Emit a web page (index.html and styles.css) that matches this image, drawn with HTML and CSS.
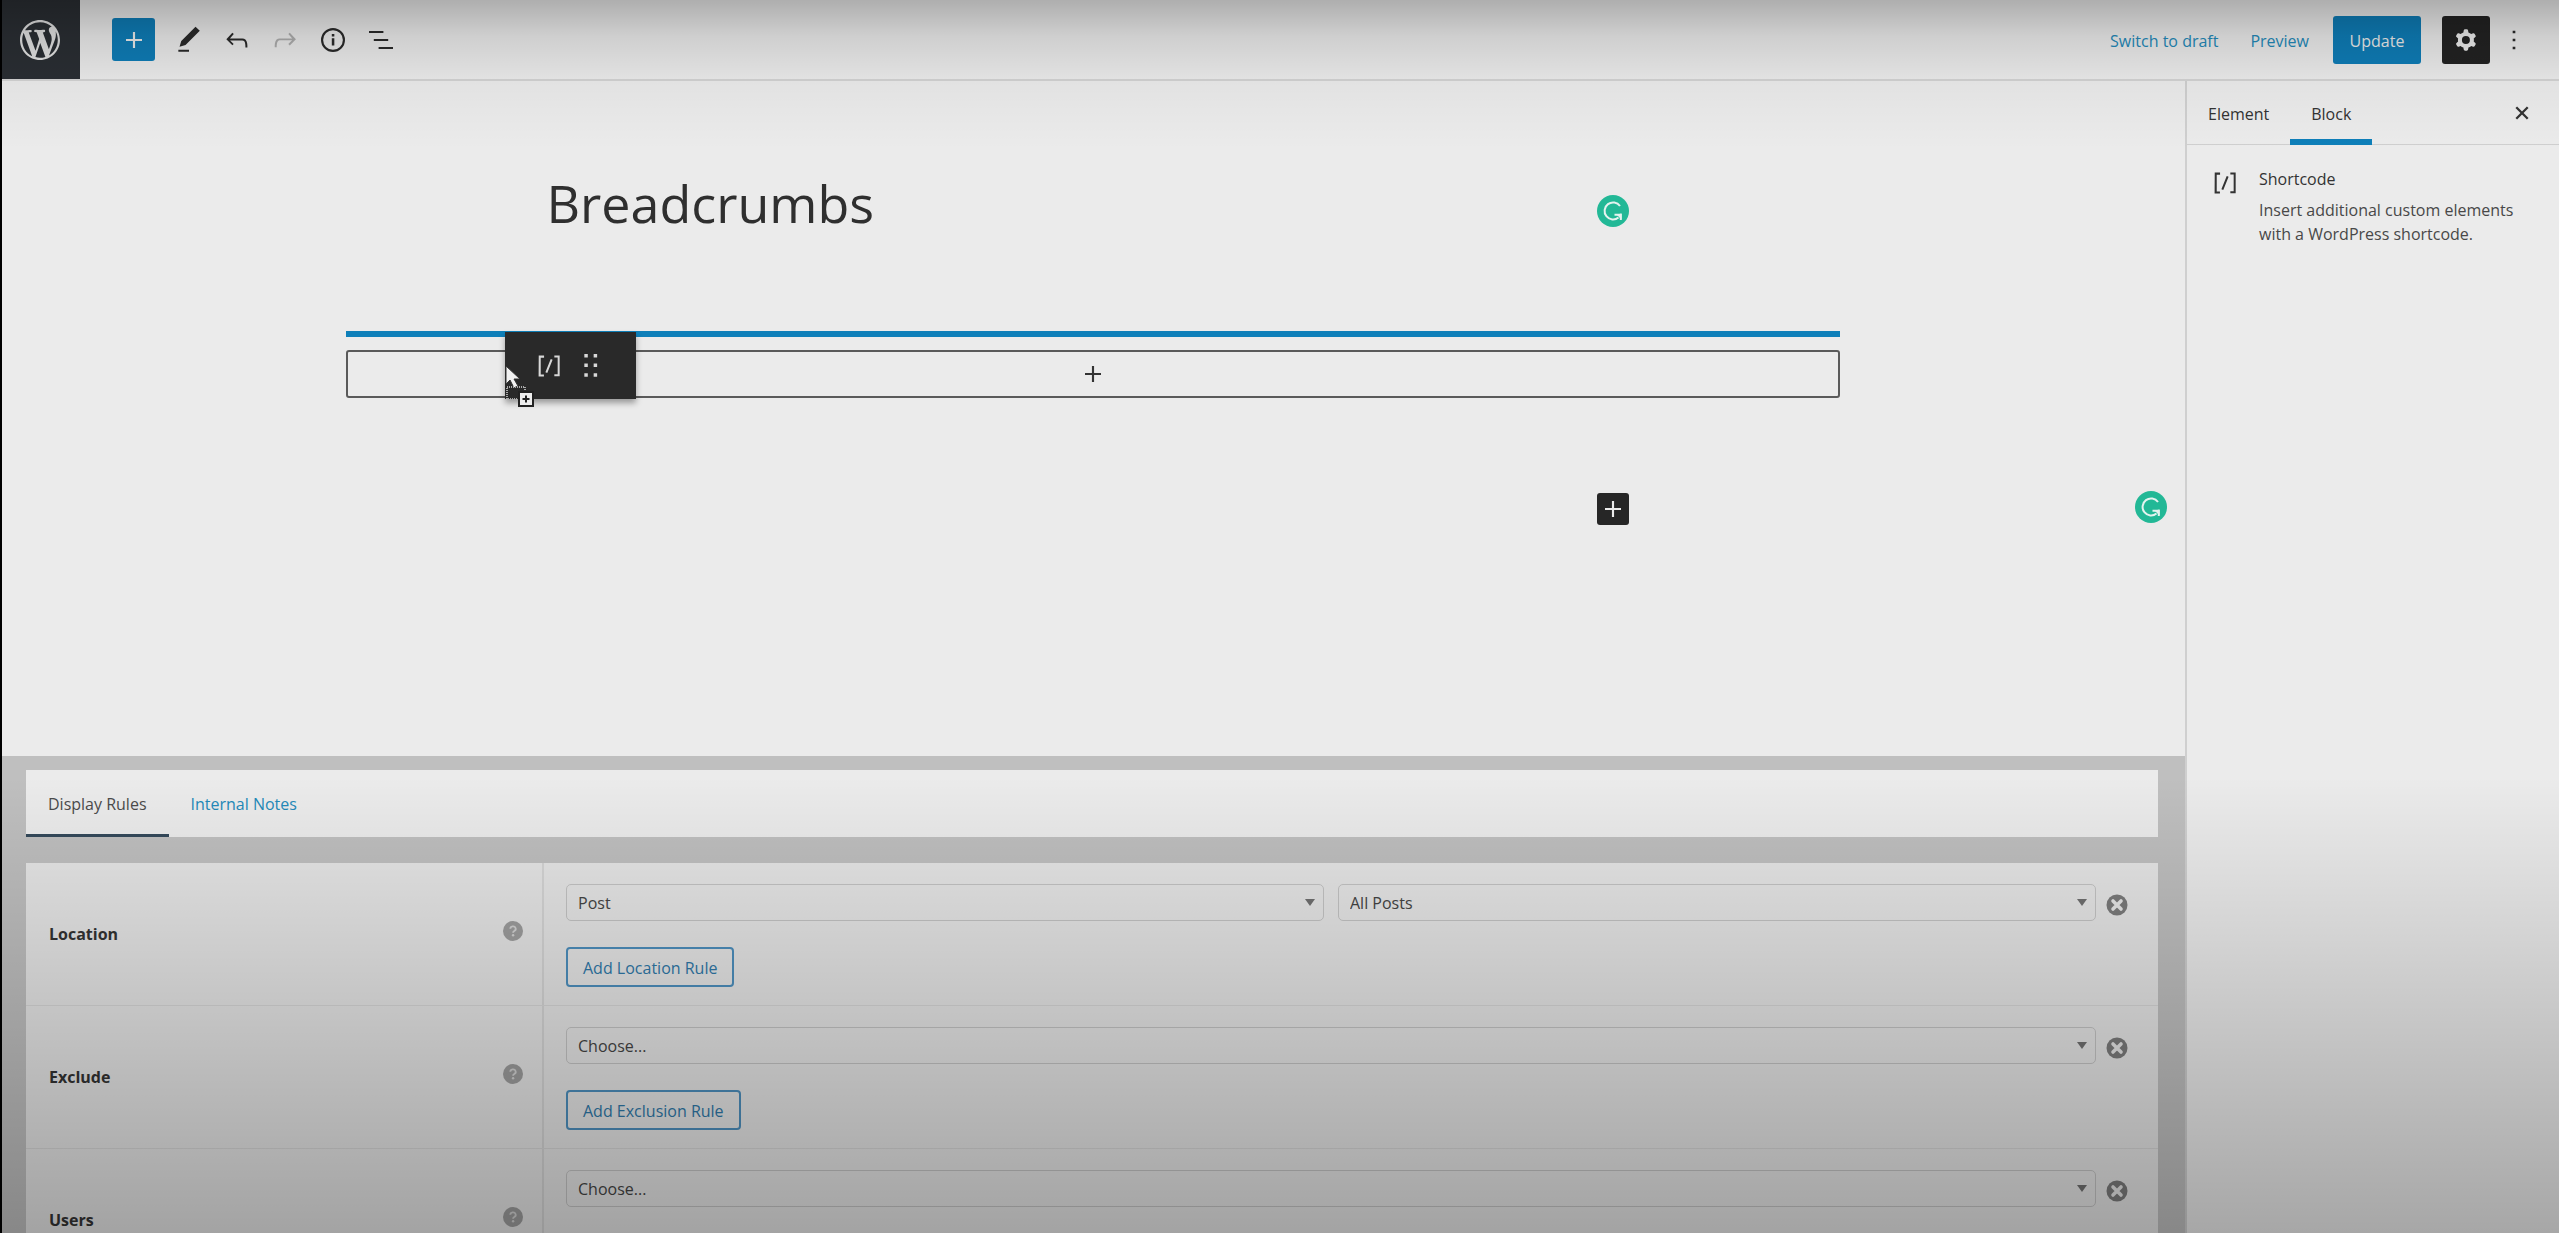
FILE: index.html
```html
<!DOCTYPE html>
<html lang="en">
<head>
<meta charset="utf-8">
<meta name="viewport" content="width=device-width, initial-scale=1">
<title>Edit Element: Breadcrumbs</title>
<link rel="stylesheet" href="styles.css">
</head>
<body>
<svg class="sprite" aria-hidden="true">
  <symbol id="plus" viewBox="0 0 24 24"><path d="M18 11.2h-5.2V6h-1.6v5.2H6v1.6h5.2V18h1.6v-5.2H18z"/></symbol>
  <symbol id="shortcode" viewBox="0 0 24 24"><path d="M16 4.2v1.5h2.5v12.5H16v1.5h4V4.2h-4zM4.2 19.8h4v-1.5H5.8V5.8h2.5V4.2h-4l-.1 15.6zm5.1-3.1l1.4.6 4-10-1.4-.6-4 10z"/></symbol>
  <symbol id="grammarly" viewBox="0 0 32 32"><circle cx="16" cy="16" r="16" fill="#22b896"/><path d="M23 11A8.500 8.500 0 1 0 21.500 22.500M17.500 19.800H23.500M23.800 18.500V25" fill="none" stroke="#e4f3ef" stroke-width="2"/><path d="M19 19h5.500v5.500z" fill="#e4f3ef"/></symbol>
  <symbol id="help" viewBox="0 0 20 20"><circle cx="10" cy="10" r="10" fill="#9d9d9d"/><path d="M7.300 7.800a2.700 2.500 0 1 1 4 2.200c-.9.500-1.200.8-1.200 1.800" fill="none" stroke="#d2d2d2" stroke-width="1.800"/><circle cx="10.100" cy="14.300" r="1.200" fill="#d2d2d2"/></symbol>
  <symbol id="remove" viewBox="0 0 22 22"><circle cx="11" cy="11" r="10.500" fill="#7b7b7b"/><path d="M7 7l8 8M15 7l-8 8" stroke="#e6e6e6" stroke-width="3.600" stroke-linecap="round"/></symbol>
</svg>

<div class="editor">
  <header class="topbar">
    <a class="logo" href="#" aria-label="View elements"><svg viewBox="0 0 20 20"><path d="M20 10c0-5.510-4.490-10-10-10C4.480 0 0 4.490 0 10c0 5.520 4.480 10 10 10 5.510 0 10-4.480 10-10zM7.780 15.370L4.370 6.220c.55-.02 1.170-.08 1.170-.08.5-.06.44-1.130-.06-1.110 0 0-1.450.11-2.370.11-.18 0-.37 0-.58-.01C4.120 2.690 6.870 1.110 10 1.110c2.330 0 4.450.87 6.050 2.340-.68-.11-1.650.39-1.650 1.580 0 .74.45 1.360.9 2.100.35.61.55 1.360.55 2.460 0 1.490-1.400 5-1.400 5l-3.030-8.370c.54-.02.82-.17.82-.17.5-.05.44-1.250-.06-1.220 0 0-1.440.12-2.380.12-.87 0-2.330-.12-2.330-.12-.5-.03-.56 1.200-.06 1.220l.92.08 1.260 3.410zM17.410 10c.24-.64.74-1.870.43-4.250.7 1.290 1.050 2.710 1.050 4.250 0 3.290-1.730 6.240-4.400 7.780.97-2.590 1.940-5.200 2.920-7.780zM6.100 18.090C3.120 16.650 1.110 13.530 1.110 10c0-1.300.23-2.480.72-3.590C3.250 10.300 4.670 14.200 6.100 18.090zm4.030-6.630l2.580 6.980c-.86.29-1.760.45-2.710.45-.79 0-1.570-.11-2.290-.33.81-2.380 1.620-4.740 2.420-7.100z"/></svg></a>
    <div class="tools">
      <button class="inserter" aria-label="Add block"><svg class="icon"><use href="#plus"/></svg></button>
      <button class="tool" aria-label="Tools"><svg class="icon" viewBox="0 0 24 24"><path d="M20.100 5.100L16.900 2 6.200 12.700l-1.300 4.400 4.500-1.300L20.100 5.100zM4 20.800h8v-1.500H4v1.500z"/></svg></button>
      <button class="tool" aria-label="Undo"><svg class="icon" viewBox="0 0 24 24"><path d="M18.300 11.700c-.6-.6-1.400-.9-2.300-.9H6.700l2.900-3.300-1.100-1-4.500 5L8.500 16l1-1-2.700-2.700H16c.5 0 .9.200 1.300.5 1 1 1 3.400 1 4.500v.3h1.500v-.2c0-1.500 0-4.300-1.500-5.700z"/></svg></button>
      <button class="tool" aria-label="Redo" disabled><svg class="icon" viewBox="0 0 24 24"><path d="M15.600 6.500l-1.100 1 2.900 3.300H8c-.9 0-1.700.3-2.300.9-1.400 1.500-1.400 4.200-1.400 5.600v.2h1.500v-.3c0-1.100 0-3.500 1-4.500.3-.3.7-.5 1.300-.5h9.200L14.500 15l1.100 1.100 4.600-4.600-4.600-5z"/></svg></button>
      <button class="tool" aria-label="Details"><svg class="icon" viewBox="0 0 24 24"><circle cx="12" cy="12" r="8.200" fill="none" stroke="currentColor" stroke-width="1.600"/><path d="M11.100 10.700h1.900v5.500h-1.900zM11.100 7.500h1.900v1.900h-1.900z"/></svg></button>
      <button class="tool" aria-label="List view"><svg class="icon" viewBox="0 0 24 24"><path d="M13.800 5.200H3v1.500h10.800V5.200zm-3.600 12v1.500H21v-1.500H10.200zm7.200-6H6.600v1.500h10.800v-1.500z"/></svg></button>
    </div>
    <div class="actions">
      <a class="action-link" href="#">Switch to draft</a>
      <a class="action-link" href="#">Preview</a>
      <button class="update">Update</button>
      <button class="settings" aria-label="Settings" aria-pressed="true"><svg class="icon" viewBox="0 0 24 24"><path fill-rule="evenodd" d="M10.289 4.836A1 1 0 0111.275 4h1.306a1 1 0 01.987.836l.244 1.466c.787.26 1.503.679 2.108 1.218l1.393-.522a1 1 0 011.216.437l.653 1.130a1 1 0 01-.23 1.273l-1.148.944a6.025 6.025 0 010 2.435l1.149.946a1 1 0 01.23 1.272l-.653 1.130a1 1 0 01-1.216.437l-1.394-.522c-.605.54-1.320.958-2.108 1.218l-.244 1.466a1 1 0 01-.987.836h-1.306a1 1 0 01-.986-.836l-.244-1.466a5.995 5.995 0 01-2.108-1.218l-1.394.522a1 1 0 01-1.217-.436l-.653-1.131a1 1 0 01.23-1.272l1.149-.946a6.026 6.026 0 010-2.435l-1.148-.944a1 1 0 01-.23-1.272l.653-1.131a1 1 0 011.217-.437l1.393.522a5.994 5.994 0 012.108-1.218l.244-1.466zM14.929 12a3 3 0 11-6 0 3 3 0 016 0z"/></svg></button>
      <button class="tool" aria-label="Options"><svg class="icon" viewBox="0 0 24 24"><path d="M11 5h2v2h-2zM11 11h2v2h-2zM11 17h2v2h-2z"/></svg></button>
    </div>
  </header>

  <main class="content">
    <section class="canvas" aria-label="Editor content">
      <div class="column title-row">
        <h1 class="title">Breadcrumbs</h1>
        <svg class="grammarly"><use href="#grammarly"/></svg>
      </div>
      <div class="block-area">
        <div class="drop-line"></div>
        <button class="appender" aria-label="Add block"><svg class="appender-icon"><use href="#plus"/></svg></button>
        <div class="drag-chip">
          <svg class="icon"><use href="#shortcode"/></svg>
          <svg class="icon" viewBox="0 0 24 24"><path d="M7 3h2.600v2.600H7zM14 3h2.600v2.600H14zM7 10.200h2.600v2.600H7zM14 10.200h2.600v2.600H14zM7 17.400h2.600V20H7zM14 17.400h2.600V20H14z"/></svg>
          <svg class="cursor" viewBox="0 0 30 44"><path d="M1 2v18l4-4 4 8 4-2-4-7h6z" fill="#f2f2f2" stroke="#333"/><path d="M2 23h18v12H2z" fill="none" stroke="#aaa" stroke-width="2" stroke-dasharray="1 1"/><path d="M14 28h14v14H14z" fill="#eee" stroke="#222" stroke-width="2"/><path d="M21 31.500v7M17.500 35h7" stroke="#222" stroke-width="2"/></svg>
        </div>
      </div>
      <div class="column inline-row">
        <button class="inline-inserter" aria-label="Add block"><svg class="appender-icon"><use href="#plus"/></svg></button>
      </div>
      <svg class="grammarly grammarly-float"><use href="#grammarly"/></svg>
    </section>

    <section class="meta" aria-label="Element settings">
      <nav class="meta-tabs">
        <a class="meta-tab meta-tab-active" href="#">Display Rules</a>
        <a class="meta-tab" href="#">Internal Notes</a>
      </nav>
      <div class="rules">
        <div class="rule">
          <div class="rule-label"><label for="location">Location</label><svg class="help"><use href="#help"/></svg></div>
          <div class="rule-body">
            <div class="fields">
              <div class="select"><select id="location"><option>Post</option></select></div>
              <div class="select"><select aria-label="Location object"><option>All Posts</option></select></div>
              <button class="remove" aria-label="Remove rule"><svg><use href="#remove"/></svg></button>
            </div>
            <button class="add">Add Location Rule</button>
          </div>
        </div>
        <div class="rule">
          <div class="rule-label"><label for="exclude">Exclude</label><svg class="help"><use href="#help"/></svg></div>
          <div class="rule-body">
            <div class="fields">
              <div class="select"><select id="exclude"><option>Choose...</option></select></div>
              <button class="remove" aria-label="Remove rule"><svg><use href="#remove"/></svg></button>
            </div>
            <button class="add">Add Exclusion Rule</button>
          </div>
        </div>
        <div class="rule">
          <div class="rule-label"><label for="users">Users</label><svg class="help"><use href="#help"/></svg></div>
          <div class="rule-body">
            <div class="fields">
              <div class="select"><select id="users"><option>Choose...</option></select></div>
              <button class="remove" aria-label="Remove rule"><svg><use href="#remove"/></svg></button>
            </div>
            <button class="add">Add User Rule</button>
          </div>
        </div>
      </div>
    </section>
  </main>

  <aside class="sidebar">
    <div class="sidebar-tabs">
      <button class="sidebar-tab">Element</button>
      <button class="sidebar-tab sidebar-tab-active">Block</button>
      <button class="close" aria-label="Close settings"><svg viewBox="0 0 14 14"><path d="M2 2l10 10M12 2L2 12" stroke="currentColor" stroke-width="2"/></svg></button>
    </div>
    <div class="block-card">
      <svg class="icon"><use href="#shortcode"/></svg>
      <div>
        <h2 class="block-name">Shortcode</h2>
        <p class="block-text">Insert additional custom elements with a WordPress shortcode.</p>
      </div>
    </div>
  </aside>
</div>
</body>
</html>
```
FILE: styles.css
```css
* { box-sizing: border-box; }

body {
  margin: 0;
  background: #000;
  color: #333;
  font: 16px/24px "Open Sans", "Noto Sans", sans-serif;
}

button, select { font: inherit; color: inherit; }
button { padding: 0; border: 0; background: none; }
a { text-decoration: none; color: #2389b9; }
svg { display: block; fill: currentColor; }
.sprite { position: absolute; width: 0; height: 0; }
.icon { width: 32px; height: 32px; flex: none; }

.editor {
  position: relative;
  display: grid;
  grid-template: 81px minmax(0, 1fr) / minmax(0, 1fr) 374px;
  height: 100vh;
  margin-left: 2px;
  background: #ebebeb;
  overflow: hidden;
}

/* Shade at the top and bottom edges of the screen */
.editor::after {
  content: "";
  position: absolute;
  inset: 0;
  pointer-events: none;
  background:
    linear-gradient(rgba(0, 0, 0, .26), rgba(0, 0, 0, .12) 36px, rgba(0, 0, 0, .04) 80px, transparent 150px),
    linear-gradient(transparent 63%, rgba(0, 0, 0, .29));
}

.topbar {
  grid-column: 1 / -1;
  display: flex;
  align-items: center;
  border-bottom: 2px solid #d2d2d2;
}
.logo {
  display: flex;
  align-items: center;
  justify-content: center;
  align-self: stretch;
  width: 78px;
  padding-right: 2px;
  background: #2a2e33;
  color: #e0e0e0;
}
.logo svg { width: 40px; height: 40px; }
.tools { display: flex; align-items: center; margin-left: 32px; }
.tool {
  display: flex;
  align-items: center;
  justify-content: center;
  width: 48px;
  height: 48px;
  color: #2a2a2a;
}
.tool:disabled { color: #adadad; }
.inserter {
  display: flex;
  align-items: center;
  justify-content: center;
  width: 43px;
  height: 43px;
  margin-right: 10px;
  border-radius: 3px;
  background: #0e7cb6;
  color: #ebebeb;
}
.actions { display: flex; align-items: center; margin-left: auto; padding-right: 21px; }
.action-link { margin-right: 32px; padding-top: 3px; }
.update {
  width: 88px;
  height: 48px;
  margin-right: 21px;
  padding-top: 3px;
  border-radius: 3px;
  background: #0e7cb6;
  color: #ebebeb;
  font-weight: 500;
}
.action-link + .update { margin-left: -8px; }
.settings {
  display: flex;
  align-items: center;
  justify-content: center;
  width: 48px;
  height: 48px;
  border-radius: 3px;
  background: #222;
  color: #ebebeb;
}

.content { display: flex; flex-direction: column; min-width: 0; overflow: hidden; }
.canvas { position: relative; flex: none; padding: 77px 26px 231px 24px; }
.column {
  display: flex;
  align-items: center;
  justify-content: space-between;
  max-width: 1092px;
  margin: 0 auto;
  padding-right: 10px;
}
.title-row { height: 90px; }
.title { margin: 0; color: #2f2f2f; font-size: 52px; font-weight: 400; line-height: 90px; }
.grammarly { width: 32px; height: 32px; }
.title-row .grammarly { margin-top: 16px; }
.grammarly-float { position: absolute; right: 18px; top: 410px; }
.block-area { position: relative; max-width: 1494px; margin: 83px auto 0; }
.drop-line { height: 6px; margin-bottom: 13px; background: #0e7fb9; }
.appender {
  display: flex;
  align-items: center;
  justify-content: center;
  width: 100%;
  height: 48px;
  border: 2px solid #5a5a5a;
  border-radius: 3px;
}
.appender-icon { width: 32px; height: 32px; }
.drag-chip {
  position: absolute;
  left: 159px;
  top: 1px;
  display: flex;
  align-items: center;
  gap: 10px;
  width: 131px;
  height: 67px;
  padding-left: 28px;
  background: #292929;
  color: #d8d8d8;
  box-shadow: 0 4px 6px rgba(0, 0, 0, .35);
}
.cursor { position: absolute; left: 0; top: 32px; width: 30px; height: 44px; }
.inline-row { justify-content: flex-end; margin-top: 95px; }
.inline-inserter {
  width: 32px;
  height: 32px;
  border-radius: 3px;
  background: #262626;
  color: #ebebeb;
}

.meta { flex: none; padding: 14px 27px 24px 24px; background: #bfbfbf; }
.meta-tabs { display: flex; height: 67px; margin-bottom: 26px; background: #ebebeb; }
.meta-tab { padding: 0 22px; line-height: 69px; }
.meta-tab-active { height: 67px; border-bottom: 3px solid #34495a; color: #4b4b4b; }
.rules { background: #e6e6e6; }
.rule { display: grid; grid-template-columns: 518px minmax(0, 1fr); height: 143px; border-bottom: 1px solid #d7d7d7; }
.rule-label {
  display: flex;
  align-items: center;
  justify-content: space-between;
  padding: 0 19px 0 23px;
  border-right: 2px solid #d5d5d5;
  font-weight: 700;
}
.help { width: 20px; height: 20px; margin-bottom: 6px; }
.rule-body { padding: 21px 30px 0 22px; }
.fields { display: flex; align-items: center; gap: 14px; margin-bottom: 26px; }
.select { position: relative; flex: 1; }
.select::after {
  content: "";
  position: absolute;
  right: 9px;
  top: 15px;
  border: 5px solid transparent;
  border-top: 7px solid #707070;
  border-bottom: 0;
  pointer-events: none;
}
.select select {
  display: block;
  width: 100%;
  height: 37px;
  padding: 1px 11px 0;
  border: 1px solid #c4c4c4;
  border-radius: 5px;
  background: transparent;
  color: #444;
  appearance: none;
}
.remove, .remove svg { width: 22px; height: 22px; }
.remove { margin: 4px 0 0 -4px; }
.add {
  height: 40px;
  padding: 1px 15px 0;
  border: 2px solid #4d8fbd;
  border-radius: 4px;
  color: #2f78a8;
}

.sidebar { border-left: 2px solid #cfcfcf; }
.sidebar-tabs { display: flex; align-items: center; height: 64px; border-bottom: 1px solid #cfcfcf; }
.sidebar-tab { height: 64px; padding: 2px 21px 0; }
.sidebar-tab-active { border-bottom: 6px solid #0e7fb9; padding-top: 8px; }
.close { width: 48px; height: 48px; margin-left: auto; margin-right: 13px; }
.close svg { width: 16px; height: 16px; margin: auto; }
.block-card { display: flex; gap: 18px; padding: 22px 30px 0 22px; }
.block-name { margin: 0 0 7px; font-size: 16px; font-weight: 500; line-height: 24px; }
.block-text { margin: 0; color: #484848; }
```
